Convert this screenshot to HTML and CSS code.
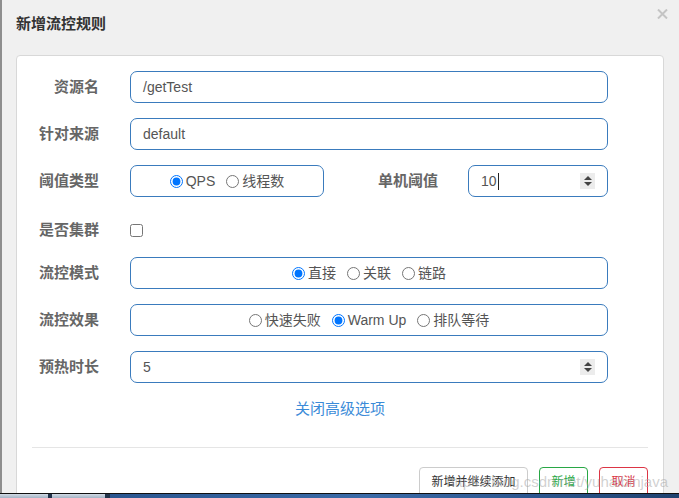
FILE: index.html
```html
<!DOCTYPE html>
<html lang="zh-CN">
<head>
<meta charset="utf-8">
<title>新增流控规则</title>
<link rel="stylesheet" href="styles.css">
</head>
<body>
<div class="screen">
  <div class="dialog">
    <div class="header">
      <h4 class="title">新增流控规则</h4>
      <span class="close" aria-label="关闭">
        <svg width="11" height="10" viewBox="0 0 11 10"><path d="M1 0.5 L10 9.5 M10 0.5 L1 9.5" stroke="#c4c4c4" stroke-width="2" fill="none"/></svg>
      </span>
    </div>
    <div class="card">
      <div class="form">
        <div class="row">
          <span class="lbl">资源名</span>
          <div class="field wide"><span class="val">/getTest</span></div>
        </div>
        <div class="row">
          <span class="lbl">针对来源</span>
          <div class="field wide"><span class="val">default</span></div>
        </div>
        <div class="row">
          <span class="lbl">阈值类型</span>
          <div class="field group small">
            <label class="opt"><input type="radio" name="grade" checked><span>QPS</span></label>
            <label class="opt"><input type="radio" name="grade"><span>线程数</span></label>
          </div>
          <span class="lbl lbl2">单机阈值</span>
          <div class="field num">
            <span class="val">10<span class="caret"></span></span>
            <span class="spin"><span class="up"></span><span class="down"></span></span>
          </div>
        </div>
        <div class="row row-check">
          <span class="lbl">是否集群</span>
          <input class="check" type="checkbox">
        </div>
        <div class="row">
          <span class="lbl">流控模式</span>
          <div class="field group wide">
            <label class="opt"><input type="radio" name="mode" checked><span>直接</span></label>
            <label class="opt"><input type="radio" name="mode"><span>关联</span></label>
            <label class="opt"><input type="radio" name="mode"><span>链路</span></label>
          </div>
        </div>
        <div class="row">
          <span class="lbl">流控效果</span>
          <div class="field group wide">
            <label class="opt"><input type="radio" name="effect"><span>快速失败</span></label>
            <label class="opt"><input type="radio" name="effect" checked><span>Warm Up</span></label>
            <label class="opt"><input type="radio" name="effect"><span>排队等待</span></label>
          </div>
        </div>
        <div class="row">
          <span class="lbl">预热时长</span>
          <div class="field wide numwide">
            <span class="val">5</span>
            <span class="spin"><span class="up"></span><span class="down"></span></span>
          </div>
        </div>
      </div>
      <div class="more"><a class="link">关闭高级选项</a></div>
      <div class="footer">
        <button class="btn btn-default">新增并继续添加</button>
        <button class="btn btn-green">新增</button>
        <button class="btn btn-red">取消</button>
      </div>
    </div>
  </div>
  <div class="taskbar">
    <span class="tb-seg tb-a"></span>
    <span class="tb-sep"></span>
    <span class="tb-seg tb-b"></span>
    <span class="tb-sep tb-sep2"></span>
    <span class="tb-rest"></span>
  </div>
  <div class="watermark">https://blog.csdn.net/yuhaibinjava</div>
</div>
</body>
</html>
```

FILE: styles.css
```css
* { box-sizing: border-box; }

html, body {
  margin: 0;
  padding: 0;
  background: #f0f0f0;
}

body {
  font-family: "Liberation Sans", Arial, "Noto Sans CJK SC", sans-serif;
}

.screen {
  position: relative;
  width: 679px;
  height: 498px;
  display: flex;
  flex-direction: column;
  overflow: hidden;
}

.dialog {
  flex: 1;
  min-height: 0;
  display: flex;
  flex-direction: column;
  padding: 0 15px 0 14px;
  border-left: 2px solid #8e8e8e;
  background: #f0f0f0;
  overflow: hidden;
}

.header {
  height: 55px;
  flex: none;
  display: flex;
  justify-content: space-between;
  align-items: flex-start;
}

.title {
  margin: 0;
  padding-top: 14px;
  font-size: 15px;
  line-height: 20px;
  font-weight: bold;
  color: #333;
}

.close {
  display: block;
  margin-top: 9px;
  margin-right: -4px;
  line-height: 0;
}

.card {
  flex: 1;
  min-height: 460px;
  background: #fff;
  border: 1px solid #d8d8d8;
  border-radius: 4px;
  padding: 15px 15px 0;
}

.form {
  display: flex;
  flex-direction: column;
}

.row {
  display: flex;
  align-items: center;
  height: 32px;
  margin-bottom: 15px;
}

.row-check {
  margin-top: 2px;
  margin-bottom: 11px;
}

.lbl {
  flex: none;
  width: 67px;
  margin-right: 31px;
  text-align: right;
  font-size: 15px;
  font-weight: bold;
  color: #666;
  line-height: 32px;
  white-space: nowrap;
}

.lbl2 {
  width: 114px;
  margin-right: 30px;
}

.field {
  height: 32px;
  border: 1px solid #3a7bbd;
  border-radius: 7px;
  display: flex;
  align-items: center;
  font-size: 14px;
  color: #555;
}

.wide { width: 478px; }
.small { width: 194px; }

.val {
  padding-left: 12px;
  display: inline-flex;
  align-items: center;
  line-height: 20px;
}

.group {
  justify-content: center;
  gap: 11px;
}

.opt {
  display: inline-flex;
  align-items: center;
  gap: 3px;
  color: #555;
  font-size: 14px;
  line-height: 20px;
  white-space: nowrap;
}

.opt input {
  margin: 0;
  width: 13px;
  height: 13px;
}

.num {
  width: 140px;
  justify-content: space-between;
  padding-right: 12px;
}

.numwide {
  justify-content: space-between;
  padding-right: 12px;
}

.caret {
  display: inline-block;
  width: 1px;
  height: 17px;
  margin-left: 1px;
  background: #222;
}

.spin {
  width: 15px;
  height: 16px;
  background: #ececec;
  display: flex;
  flex-direction: column;
  align-items: center;
  justify-content: center;
  gap: 2px;
}

.up, .down {
  width: 0;
  height: 0;
  border-left: 4px solid transparent;
  border-right: 4px solid transparent;
}

.up { border-bottom: 4px solid #444; }
.down { border-top: 4px solid #444; }

.check {
  margin: 0;
  width: 13px;
  height: 13px;
}

.more {
  text-align: center;
  line-height: 22px;
}

.link {
  color: #3b8bd8;
  font-size: 15px;
  cursor: pointer;
}

.footer {
  margin-top: 27px;
  border-top: 1px solid #e5e5e5;
  padding-top: 19px;
  display: flex;
  justify-content: flex-end;
  gap: 11px;
}

.btn {
  height: 30px;
  padding: 0 11.5px;
  background: #fff;
  border-radius: 4px;
  font-family: "Liberation Sans", Arial, "Noto Sans CJK SC", sans-serif;
  font-size: 12px;
  line-height: 28px;
  cursor: pointer;
}

.btn-default { border: 1px solid #cccccc; color: #333; }
.btn-green { border: 1px solid #28a745; color: #28a745; }
.btn-red { border: 1px solid #dc3545; color: #dc3545; }

.taskbar {
  flex: none;
  height: 5px;
  border-top: 1px solid #111;
  display: flex;
}

.tb-seg {
  background: linear-gradient(#d2dbe5, #a3b3c5);
}

.tb-a { width: 48px; }
.tb-b { width: 53px; }

.tb-sep {
  width: 4px;
  background: #22344b;
}

.tb-sep2 { width: 5px; }

.tb-rest {
  flex: 1;
  background: linear-gradient(90deg, #2a5690, #3b6ba8 45%, #2b568f 75%, #1f426f);
}

.watermark {
  position: absolute;
  right: 11px;
  top: 472px;
  font-size: 15px;
  line-height: 20px;
  color: rgba(170, 170, 170, 0.55);
  pointer-events: none;
  white-space: nowrap;
}
```
